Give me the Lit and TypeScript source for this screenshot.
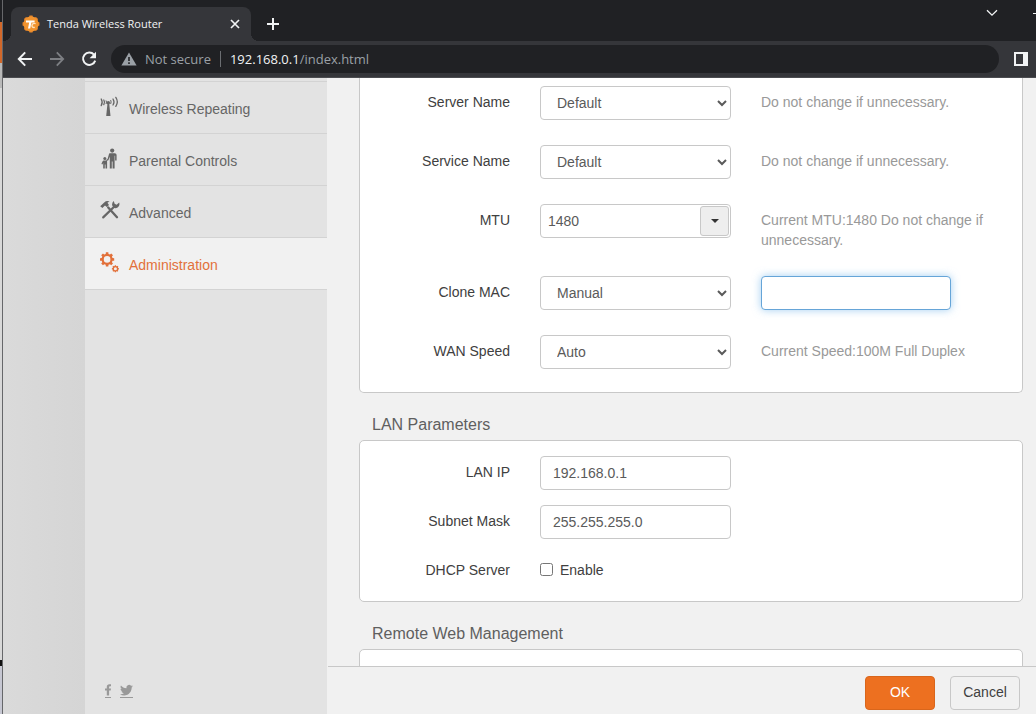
import { LitElement, html, css, svg } from "lit";
import { customElement } from "lit/decorators.js";
import { classMap } from "lit/directives/class-map.js";

const gearPath = (cx: number, cy: number, outer: number, inner: number, teeth: number) => {
  const points: string[] = [];
  const step = (Math.PI * 2) / teeth;
  for (let i = 0; i < teeth; i++) {
    const a = i * step;
    for (const [offset, r] of [
      [-0.32, inner],
      [-0.22, outer],
      [0.22, outer],
      [0.32, inner],
    ]) {
      const t = a + offset * step;
      points.push(`${(cx + Math.cos(t) * r).toFixed(2)} ${(cy + Math.sin(t) * r).toFixed(2)}`);
    }
  }
  return `M${points.join("L")}Z`;
};

const hole = (cx: number, cy: number, r: number) =>
  `M${cx - r} ${cy}a${r} ${r} 0 1 0 ${r * 2} 0a${r} ${r} 0 1 0 ${-r * 2} 0Z`;

const menuIcons: Record<string, unknown> = {
  repeating: svg`
    <g fill="none" stroke="currentColor" stroke-width="1.3" stroke-linecap="round">
      <path d="M3.800 4q1.500 2.200 0 4.600M1.200 3q2 3.300 0 6.600"/>
      <path d="M6.200 4.800q.8 1.300 0 2.800" stroke-width="1"/>
      <path d="M10.800 4.400q.8 1.500 0 3.200" stroke-width="1"/>
      <path d="M13 3q2 3 0 6M15.800 1.400q3 4.400 0 9"/>
    </g>
    <circle cx="8.300" cy="6.800" r="1.800" fill="currentColor"/>
    <path d="M7.500 7.500h1.700l1.300 12.500H6.200z" fill="currentColor"/>`,
  parental: svg`
    <g fill="currentColor">
      <circle cx="12.2" cy="2.600" r="2.100"/>
      <path d="M9.600 5.200h5.200q1.800 0 1.800 1.800v5.600h-1.500V7.800h-.5V20.600h-2v-7.200h-.8v7.200h-2V8.600L8.400 12.200 6.600 13l-.6-1 1.600-1L9 6q.2-.8.6-.8z"/>
      <circle cx="4.800" cy="10.600" r="1.500"/>
      <path d="M3.400 12.600h2.800q.9 0 .9 1v6.900H5.500v-4H4.800v4H3.200v-5.600L2.400 16.600 1.400 16l1.200-2.800z"/>
    </g>`,
  advanced: svg`
    <g fill="none" stroke="currentColor" stroke-linecap="round">
      <path d="M8.200 7.400 17 17.200" stroke-width="2.300"/>
      <path d="M14.600 6.200 3.200 17.400" stroke-width="2.200"/>
    </g>
    <path d="M.2 6.200 4.200 2.400q2.200-2 5.400-1L7.400 2.800 9 5 6.800 7 5 5.400 2.400 8z" fill="currentColor"/>
    <path d="M12.200 5.600q-.6-3 1.600-4.600l.8 2.800 2 1 2.600-2.200q1 3.400-1.600 5-2 1-3.800.2z" fill="currentColor"/>`,
  administration: svg`
    <path fill="currentColor" fill-rule="evenodd" d=${gearPath(7.1, 7.4, 7.2, 5.6, 8) + hole(7.1, 7.4, 3.3)}/>
    <path fill="currentColor" fill-rule="evenodd" d=${gearPath(15.4, 16.8, 3.6, 2.9, 8) + hole(15.4, 16.8, 1.5)}/>`,
};

@customElement("browser-chrome")
export class BrowserChrome extends LitElement {
  static styles = css`
    :host {
      display: block;
      background: #202124;
      color: #f1f3f4;
      font-family: "Open Sans", "Noto Sans", sans-serif;
    }
    button {
      display: flex;
      align-items: center;
      justify-content: center;
      padding: 0;
      border: 0;
      background: none;
      color: inherit;
    }
    .strip {
      display: flex;
      align-items: center;
      height: 41px;
      padding-left: 8px;
    }
    .tab {
      position: relative;
      box-sizing: border-box;
      display: flex;
      align-items: center;
      align-self: flex-end;
      width: 240px;
      height: 34px;
      padding: 0 8px 0 11px;
      border-radius: 8px 8px 0 0;
      background: #35363a;
    }
    .tab::before,
    .tab::after {
      content: "";
      position: absolute;
      bottom: 0;
      width: 8px;
      height: 8px;
    }
    .tab::before {
      left: -8px;
      background: radial-gradient(circle at 0 0, transparent 8px, #35363a 8px);
    }
    .tab::after {
      right: -8px;
      background: radial-gradient(circle at 100% 0, transparent 8px, #35363a 8px);
    }
    .title {
      flex: 1;
      margin-left: 7px;
      font-size: 11px;
      line-height: 16px;
      white-space: nowrap;
    }
    .close {
      width: 16px;
      height: 16px;
    }
    .new {
      width: 28px;
      height: 28px;
      margin: 7px 0 0 8px;
    }
    .window {
      display: flex;
      align-items: center;
      gap: 35px;
      margin: 0 0 15px auto;
    }
    .bar {
      display: flex;
      align-items: center;
      height: 36px;
      padding-left: 14px;
      border-bottom: 1px solid #4b4c50;
      background: #35363a;
    }
    .nav {
      display: flex;
      gap: 16px;
    }
    .nav button {
      width: 16px;
      height: 16px;
    }
    .dim {
      color: #7d7f83;
    }
    .address {
      flex: 1;
      display: flex;
      align-items: center;
      height: 28px;
      margin: 0 15px 0 14px;
      padding-left: 10px;
      border-radius: 14px;
      background: #202124;
      font-size: 13px;
      line-height: 18px;
    }
    .insecure {
      margin-left: 8px;
      color: #9aa0a6;
    }
    .divider {
      width: 1px;
      height: 16px;
      margin: 0 9px;
      background: #6b6e72;
    }
    .path {
      color: #9aa0a6;
    }
    .panel {
      width: 14px;
      height: 14px;
      margin-right: 8px;
    }
  `;

  render() {
    return html`
      <div class="strip">
        <div class="tab">
          <svg width="18" height="18" viewBox="0 0 18 18" aria-hidden="true">
            <path d=${gearPath(9, 9, 8.6, 7.6, 8)} fill="#e8862a" />
            <circle cx="9" cy="9" r="7.4" fill="#f0932f" />
            <path d="M4 5.4h8.600v2H9.400l-1.200 6H6l1.200-6H4z" fill="#fff" />
            <path d="M13.600 8.600q-3.200-1-3.600 1.800-.2 2.400 2.800 2" fill="none" stroke="#ffe3c0" stroke-width="1.400" />
          </svg>
          <span class="title">Tenda Wireless Router</span>
          <button class="close" aria-label="Close tab">
            <svg width="16" height="16" viewBox="0 0 16 16">
              <path d="M4 4l8 8M12 4l-8 8" stroke="currentColor" stroke-width="1.700" />
            </svg>
          </button>
        </div>
        <button class="new" aria-label="New tab">
          <svg width="14" height="14" viewBox="0 0 14 14">
            <path d="M7 1v12M1 7h12" stroke="currentColor" stroke-width="2" />
          </svg>
        </button>
        <div class="window">
          <button aria-label="Search tabs">
            <svg width="12" height="8" viewBox="0 0 12 8">
              <path d="M1 1.200l5 5 5-5" fill="none" stroke="currentColor" stroke-width="1.300" />
            </svg>
          </button>
          <button aria-label="Minimize">
            <svg width="3" height="8" viewBox="0 0 3 8">
              <path d="M0 4.500h3" stroke="currentColor" stroke-width="1" />
            </svg>
          </button>
        </div>
      </div>
      <div class="bar">
        <div class="nav">
          <button aria-label="Back">
            <svg width="16" height="16" viewBox="0 0 16 16">
              <path d="M15 8H2M8.200 1.400L1.800 8l6.400 6.600" fill="none" stroke="currentColor" stroke-width="2" />
            </svg>
          </button>
          <button class="dim" aria-label="Forward">
            <svg width="16" height="16" viewBox="0 0 16 16">
              <path d="M1 8h13M7.800 1.400L14.200 8l-6.400 6.600" fill="none" stroke="currentColor" stroke-width="1.800" />
            </svg>
          </button>
          <button aria-label="Reload">
            <svg width="16" height="16" viewBox="0 0 16 16">
              <path d="M13 3.600A6.200 6.200 0 1 0 14.200 9.600" fill="none" stroke="currentColor" stroke-width="2" />
              <path d="M15 .8v6.400H8.600z" fill="currentColor" />
            </svg>
          </button>
        </div>
        <div class="address">
          <svg width="16" height="14" viewBox="0 0 16 14" aria-hidden="true">
            <path d="M8 .4L15.600 13.600H.4z" fill="#9aa0a6" />
            <path d="M7.200 5h1.600v4H7.200zM7.200 10.200h1.600v1.700H7.200z" fill="#202124" />
          </svg>
          <span class="insecure">Not secure</span>
          <span class="divider"></span>
          <span>192.168.0.1<span class="path">/index.html</span></span>
        </div>
        <button class="panel" aria-label="Side panel">
          <svg width="14" height="14" viewBox="0 0 14 14">
            <path d="M0 0h14v14H0zM2 2v10h7V2z" fill="currentColor" fill-rule="evenodd" />
          </svg>
        </button>
      </div>
    `;
  }
}

@customElement("side-menu")
export class SideMenu extends LitElement {
  static styles = css`
    :host {
      display: flex;
      flex-direction: column;
      background: #e3e3e3;
      color: #666;
      font: 14px/20px "Liberation Sans", Arial, sans-serif;
    }
    nav {
      padding-top: 3px;
    }
    .item {
      display: flex;
      align-items: center;
      gap: 9px;
      height: 49px;
      padding: 2px 0 0 15px;
      border-top: 1px solid #d3d3d3;
      color: inherit;
      text-decoration: none;
    }
    .item svg {
      margin-bottom: 4px;
    }
    .item.active {
      background: #f1f1f1;
      color: #e2703a;
    }
    .end {
      border-top: 1px solid #d3d3d3;
    }
    .social {
      display: flex;
      gap: 9px;
      margin-top: auto;
      padding: 0 0 16px 20px;
    }
    .social a {
      display: flex;
      padding-bottom: 1px;
      border-bottom: 1px solid #999;
      color: #999;
    }
  `;

  private items = [
    ["repeating", "Wireless Repeating"],
    ["parental", "Parental Controls"],
    ["advanced", "Advanced"],
    ["administration", "Administration"],
  ];

  render() {
    return html`
      <nav>
        ${this.items.map(
          ([id, name]) => html`
            <a class=${classMap({ item: true, active: id === "administration" })} href="#${id}">
              <svg width="20" height="21" viewBox="0 0 20 21" aria-hidden="true">${menuIcons[id]}</svg>
              <span>${name}</span>
            </a>
          `
        )}
        <div class="end"></div>
      </nav>
      <div class="social">
        <a href="#facebook" aria-label="Facebook">
          <svg width="6" height="12" viewBox="0 0 6 12">
            <path d="M6 .2v2H4.900q-.8 0-.8.9v1.300H6l-.3 2H4.100V11.600H1.800V6.400H0v-2h1.800V2.800Q1.800.2 4.400.2z" fill="currentColor" />
          </svg>
        </a>
        <a href="#twitter" aria-label="Twitter">
          <svg width="13" height="12" viewBox="0 0 24 21">
            <path d="M24 3.400c-.9.4-1.800.7-2.800.8 1-.6 1.800-1.600 2.200-2.700-1 .6-2 1-3.100 1.200A4.900 4.900 0 0 0 11.900 7.200C7.700 7 4.100 5 1.700 2c-1.300 2.200-.7 5.100 1.500 6.600-.8 0-1.600-.2-2.200-.6 0 2.300 1.600 4.400 3.900 4.900-.7.200-1.500.2-2.200.1.6 2 2.400 3.400 4.600 3.400A9.900 9.900 0 0 1 0 18.400 14 14 0 0 0 7.500 20.600c9.100 0 14.300-7.700 14-14.600 1-.7 1.800-1.600 2.500-2.600z" fill="currentColor" />
          </svg>
        </a>
      </div>
    `;
  }
}

@customElement("router-settings")
export class RouterSettings extends LitElement {
  static styles = css`
    :host {
      display: flex;
      flex-direction: column;
      min-width: 0;
      min-height: 0;
      background: #f1f1f1;
      color: #404040;
      font: 14px/20px "Liberation Sans", Arial, sans-serif;
    }
    .content {
      flex: 1;
      min-height: 0;
      overflow: hidden;
      padding: 0 13px 0 32px;
    }
    .panel {
      display: grid;
      gap: 15px;
      padding: 15px 0 13px;
      border: 1px solid #c8c8c8;
      border-radius: 5px;
      background: #fff;
    }
    .wan {
      gap: 25px;
      padding: 8px 0 23px;
      border-top: 0;
      border-radius: 0 0 5px 5px;
    }
    .heading {
      margin: 0;
      padding: 21px 13px 4px;
      color: #5f5f5f;
      font-size: 16px;
      font-weight: 400;
      line-height: 22px;
    }
    .row {
      display: grid;
      grid-template-columns: 150px 191px minmax(0, 1fr);
      column-gap: 30px;
      align-items: start;
      min-height: 34px;
      padding-right: 30px;
    }
    .name {
      padding-top: 6px;
      text-align: right;
    }
    .hint {
      margin: 0;
      padding: 6px 0 1px;
      color: #999;
    }
    .field {
      box-sizing: border-box;
      width: 100%;
      height: 34px;
      padding: 6px 12px;
      border: 1px solid #c8c8c8;
      border-radius: 4px;
      background: #fff;
      color: #5a5a5a;
      font: inherit;
      outline: none;
    }
    .field.current {
      width: 190px;
      border-color: #66a5d8;
      box-shadow: 0 0 8px rgba(102, 175, 233, 0.6);
    }
    .combo {
      display: flex;
      padding: 1px;
    }
    .combo input {
      flex: 1;
      min-width: 0;
      padding: 0 6px;
      border: 0;
      background: none;
      color: inherit;
      font: inherit;
      outline: none;
    }
    .drop {
      display: flex;
      align-items: center;
      justify-content: center;
      width: 29px;
      padding: 0;
      border: 1px solid #c8c8c8;
      border-radius: 3px;
      background: #eee;
      color: #333;
    }
    .check {
      display: flex;
      align-items: center;
      gap: 7px;
      padding-top: 6px;
    }
    .check input {
      width: 13px;
      height: 13px;
      margin: 0 0 1px;
    }
    .footer {
      display: flex;
      justify-content: flex-end;
      gap: 15px;
      margin-left: 1px;
      padding: 9px 16px 4px;
      border-top: 1px solid #c8c8c8;
    }
    .action {
      box-sizing: border-box;
      width: 70px;
      height: 34px;
      padding: 0 0 2px;
      border: 1px solid #c8c8c8;
      border-radius: 4px;
      background: #f1f1f1;
      color: #404040;
      font: inherit;
    }
    .action.primary {
      border-color: #d9661c;
      background: #ed7020;
      color: #fff;
    }
  `;

  private select(id: string, name: string, value: string, aside: unknown) {
    return html`
      <div class="row">
        <label class="name" for=${id}>${name}</label>
        <select class="field" id=${id}>
          <option>${value}</option>
        </select>
        ${aside}
      </div>
    `;
  }

  private hint(text: string) {
    return html`<p class="hint">${text}</p>`;
  }

  render() {
    return html`
      <div class="content">
        <section class="panel wan">
          ${this.select("server", "Server Name", "Default", this.hint("Do not change if unnecessary."))}
          ${this.select("service", "Service Name", "Default", this.hint("Do not change if unnecessary."))}
          <div class="row">
            <label class="name" for="mtu">MTU</label>
            <div class="field combo">
              <input id="mtu" type="text" value="1480" />
              <button class="drop" aria-label="Choose MTU">
                <svg width="8" height="4" viewBox="0 0 8 4"><path d="M0 0h8L4 4z" fill="currentColor" /></svg>
              </button>
            </div>
            ${this.hint("Current MTU:1480 Do not change if unnecessary.")}
          </div>
          ${this.select(
            "clone",
            "Clone MAC",
            "Manual",
            html`<input class="field current" type="text" aria-label="MAC address" />`
          )}
          ${this.select("speed", "WAN Speed", "Auto", this.hint("Current Speed:100M Full Duplex"))}
        </section>

        <h2 class="heading">LAN Parameters</h2>
        <section class="panel">
          <div class="row">
            <label class="name" for="lan-ip">LAN IP</label>
            <input class="field" id="lan-ip" type="text" value="192.168.0.1" />
          </div>
          <div class="row">
            <label class="name" for="mask">Subnet Mask</label>
            <input class="field" id="mask" type="text" value="255.255.255.0" />
          </div>
          <div class="row">
            <span class="name">DHCP Server</span>
            <label class="check"><input type="checkbox" />Enable</label>
          </div>
        </section>

        <h2 class="heading">Remote Web Management</h2>
        <section class="panel"><div class="row"></div></section>
      </div>
      <div class="footer">
        <button class="action primary">OK</button>
        <button class="action">Cancel</button>
      </div>
    `;
  }
}

@customElement("app-root")
export class AppRoot extends LitElement {
  static styles = css`
    :host {
      display: grid;
      grid-template-columns: 3px minmax(0, 1fr);
      height: 100vh;
      overflow: hidden;
    }
    .behind {
      box-sizing: border-box;
      border-right: 1px solid #66676a;
      background: linear-gradient(
        #202124 22px,
        #d2682a 22px 63px,
        #b9b9b9 63px 88px,
        #d8d8d8 88px 660px,
        #111 660px 666px,
        #c6c7d2 666px
      );
    }
    .window {
      display: flex;
      flex-direction: column;
      min-width: 0;
      min-height: 0;
    }
    .page {
      flex: 1;
      display: grid;
      grid-template-columns: 82px 242px minmax(0, 1fr);
      min-height: 0;
    }
    .gutter {
      background: linear-gradient(90deg, #dadada, #d5d5d5);
    }
  `;

  render() {
    return html`
      <div class="behind"></div>
      <div class="window">
        <browser-chrome></browser-chrome>
        <div class="page">
          <div class="gutter"></div>
          <side-menu></side-menu>
          <router-settings></router-settings>
        </div>
      </div>
    `;
  }
}
